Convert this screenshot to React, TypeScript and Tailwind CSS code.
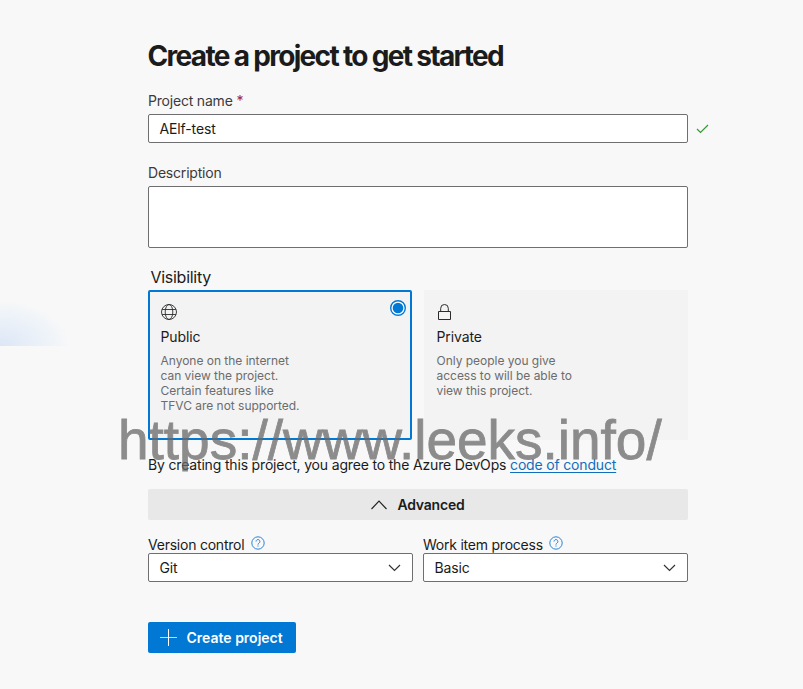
import type { ReactNode } from "react";

const HelpIcon = () => (
  <svg className="mt-px" width="14" height="14" viewBox="0 0 14 14" fill="none" stroke="#2b85d6" strokeWidth="1">
    <circle cx="7" cy="7" r="6.2" />
    <path d="M5.1 5.500a1.900 1.900 0 1 1 3 1.500C7.400 7.500 7 7.800 7 8.700" />
    <path d="M7 9.500v1.100" />
  </svg>
);

const GlobeIcon = () => (
  <svg width="16" height="16" viewBox="0 0 16 16" fill="none" stroke="#2b2b2b" strokeWidth="0.9">
    <circle cx="8" cy="8" r="7.500" />
    <ellipse cx="8" cy="8" rx="3.800" ry="7.500" />
    <path d="M1.100 5.500h13.800M1.100 10.500h13.800" />
  </svg>
);

const LockIcon = () => (
  <svg width="16" height="16" viewBox="0 0 16 16" fill="none" stroke="#2b2b2b" strokeWidth="1">
    <path d="M1.500 7.500h12v8h-12zM3.700 7.500V4.300a3.800 3.800 0 0 1 7.600 0v3.200" />
  </svg>
);

function Card({ icon, title, lines, selected }: { icon: ReactNode; title: string; lines: string[]; selected?: boolean }) {
  return (
    <div
      className={
        selected
          ? "flex h-[150px] w-[264px] justify-between rounded-[2px] border-2 border-[#0078d4] bg-[#f3f3f3] pt-3 pl-[10.5px]"
          : "flex h-[150px] w-[264px] justify-between border-2 border-[#f3f3f3] bg-[#f3f3f3] pt-3 pl-[10.5px]"
      }
    >
      <div>
        {icon}
        <div className="mt-[7px] text-[14px] leading-5 tracking-[-0.12px]">{title}</div>
        <div className="mt-[6px] text-[12px] leading-[15px] tracking-[-0.02px] text-[#6c6c6c]">
          {lines.map((line) => (
            <div key={line}>{line}</div>
          ))}
        </div>
      </div>
      {selected && (
        <svg className="-mt-1 mr-1" width="16" height="16" viewBox="0 0 16 16">
          <circle cx="8" cy="8" r="7.300" fill="#fff" stroke="#0078d4" strokeWidth="1.400" />
          <circle cx="8" cy="8" r="5.300" fill="#0078d4" />
        </svg>
      )}
    </div>
  );
}

function Picker({ label, value }: { label: string; value: string }) {
  return (
    <div className="w-[265px]">
      <div className="flex h-[18px] items-start gap-[6.5px]">
        <span className="mt-px text-[14px] leading-[18px] tracking-[-0.23px] whitespace-nowrap">{label}</span>
        <HelpIcon />
      </div>
      <div className="flex h-[29px] items-center justify-between rounded-[2px] border border-[#6f6f72] bg-white pr-[11px] pl-[10.5px] text-[14px] tracking-[-0.15px]">
        <span>{value}</span>
        <svg className="mt-px" width="13" height="8" viewBox="0 0 13 8" fill="none" stroke="#333" strokeWidth="1.200">
          <path d="M1 1l5.500 5.500L12 1" />
        </svg>
      </div>
    </div>
  );
}

export default function App() {
  return (
    <div className="relative h-[689px] w-[803px] overflow-hidden bg-[#f8f8f8] font-['Inter',sans-serif] text-[#1b1b1b]">
      <div className="absolute top-[300px] left-0 h-[46px] w-[70px] bg-[radial-gradient(ellipse_70px_46px_at_0%_100%,#dbe6f5_0%,#e7eef8_40%,#eff4f9_75%,#f8f8f8_100%)]" />

      <main className="relative flex flex-col items-start pt-[38px] pl-[148px]">
        <h1 className="-ml-[0.5px] h-9 text-[28px] leading-9 font-bold tracking-[-1.68px] whitespace-nowrap">Create a project to get started</h1>

        <label className="mt-[17px] flex h-[20px] gap-1 text-[14px] leading-5 tracking-[-0.2px] text-[#3b3b3b]">
          Project name <span className="text-[#a4262c]">*</span>
        </label>
        <div className="mt-[3px] flex items-center gap-2">
          <div className="flex h-[29px] w-[540px] items-center rounded-[2px] border border-[#6f6f72] bg-white pl-[10.5px] text-[14px] tracking-[-0.12px]">
            AElf-test
          </div>
          <svg width="13" height="10" viewBox="0 0 13 10" fill="none" stroke="#339933" strokeWidth="1.200">
            <path d="M1 5l3.500 3.500L12 1" />
          </svg>
        </div>

        <label className="mt-5 text-[14px] leading-5 tracking-[-0.2px] text-[#3b3b3b]">Description</label>
        <div className="mt-[3px] h-[62px] w-[540px] rounded-[2px] border border-[#6f6f72] bg-white" />

        <div className="mt-[17px] mb-px pl-[2.5px] text-[16px] leading-6 tracking-[-0.28px]">Visibility</div>
        <div className="flex gap-3">
          <Card
            selected
            icon={<GlobeIcon />}
            title="Public"
            lines={["Anyone on the internet", "can view the project.", "Certain features like", "TFVC are not supported."]}
          />
          <Card icon={<LockIcon />} title="Private" lines={["Only people you give", "access to will be able to", "view this project."]} />
        </div>

        <p className="mt-[15px] text-[14px] leading-5 tracking-[-0.17px] whitespace-nowrap">
          By creating this project, you agree to the Azure DevOps{" "}
          <a className="text-[#106ebe] underline underline-offset-2">code of conduct</a>
        </p>

        <button className="mt-[14px] flex h-[31px] w-[540px] items-center justify-center gap-[10px] rounded-[2px] bg-[#e8e8e8] text-[14px] font-semibold tracking-[-0.2px]">
          <svg width="16" height="10" viewBox="0 0 16 10" fill="none" stroke="#222" strokeWidth="1.100">
            <path d="M.5 9L8 1l7.500 8" />
          </svg>
          Advanced
        </button>

        <div className="mt-[15px] flex gap-[10px]">
          <Picker label="Version control" value="Git" />
          <Picker label="Work item process" value="Basic" />
        </div>

        <button className="mt-10 flex h-[31px] w-[148px] items-center gap-[9.5px] rounded-[2px] bg-[#0078d4] pl-3 text-[14px] font-semibold whitespace-nowrap text-white">
          <svg width="17" height="17" viewBox="0 0 17 17" stroke="#fff" strokeWidth="1">
            <path d="M8.500 0v17" />
            <path d="M0 8.500h17" strokeOpacity="0.75" />
          </svg>
          Create project
        </button>
      </main>

      <div className="pointer-events-none absolute top-[408px] left-[118px] font-['Liberation_Sans',Arial,sans-serif] text-[55px] leading-[64px] tracking-[-0.02px] whitespace-nowrap text-[#686868] opacity-75 [-webkit-text-stroke:0.8px_#686868]">
        https://www.leeks.info/
      </div>
    </div>
  );
}
